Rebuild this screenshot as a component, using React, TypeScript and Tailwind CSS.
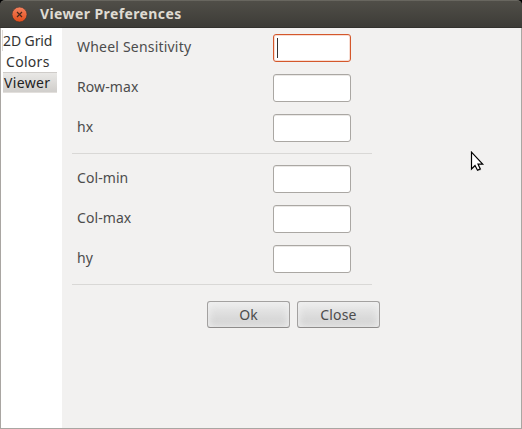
const groups = [
  [
    { label: "Wheel Sensitivity", spacing: "tracking-[0.2px]", focused: true },
    { label: "Row-max", spacing: "tracking-[0.1px]" },
    { label: "hx", spacing: "tracking-normal" },
  ],
  [
    { label: "Col-min", spacing: "tracking-[0.08px]" },
    { label: "Col-max", spacing: "tracking-[0.08px]" },
    { label: "hy", spacing: "tracking-normal" },
  ],
];

function TitleBar() {
  return (
    <header className="flex h-7 shrink-0 items-center rounded-t-[5px] border-t border-b border-t-[#68665f] border-b-[#33322e] bg-gradient-to-b from-[#504e48] to-[#3d3c37] pl-3">
      <svg width="16" height="16" viewBox="0 0 16 16" className="mt-px shrink-0">
        <defs>
          <linearGradient id="close" x1="0" y1="0" x2="0" y2="1">
            <stop offset="0" stopColor="#f58360" />
            <stop offset="1" stopColor="#e34c19" />
          </linearGradient>
        </defs>
        <circle cx="7.5" cy="7.5" r="7.5" fill="url(#close)" stroke="#34332f" strokeWidth="0.6" />
        <path d="M5 5l5 5M10 5l-5 5" stroke="#48291c" strokeWidth="1.2" />
      </svg>
      <h1 className="ml-3 whitespace-nowrap text-[14px] leading-5 font-bold tracking-[0.4px] text-[#dfdbd2]">
        Viewer Preferences
      </h1>
    </header>
  );
}

function Sidebar() {
  return (
    <nav className="w-[61px] shrink-0 bg-white pt-0.5 pl-px text-[14px] leading-[21px] text-[#333] whitespace-nowrap">
      <div className="h-[21px] w-[57px] border-l border-[#dedbd8] tracking-[-0.1px]">2D Grid</div>
      <div className="h-[21px] pl-1 tracking-[0.3px]">Colors</div>
      <div className="ml-px h-[21px] w-[54px] border-y border-t-[#cfccc9] border-b-[#e2dfdc] bg-gradient-to-b from-[#e9e8e6] to-[#d0cecb] pl-px leading-[19px] tracking-[0.35px] text-[#222]">
        Viewer
      </div>
    </nav>
  );
}

function Field({ label, spacing, focused }: { label: string; spacing: string; focused?: boolean }) {
  return (
    <div className="flex h-7">
      <label className={`w-[201px] pl-[5px] text-[14px] leading-[26px] text-[#4c4c4c] whitespace-nowrap ${spacing}`}>
        {label}
      </label>
      <div
        className={`h-7 w-[78px] rounded-[3px] border bg-white py-[3px] pl-[3px] ${
          focused
            ? "border-[#d4572b] shadow-[inset_0_0_0_1px_#f7ddd3]"
            : "border-[#aaa7a3] shadow-[inset_0_1px_0_#ebe9e7]"
        }`}
      >
        {focused && <div className="h-5 w-px bg-[#333]" />}
      </div>
    </div>
  );
}

function Button({ children }: { children: string }) {
  return (
    <button className="h-[27px] w-[83px] rounded-[3px] border border-[#a3a1a0] border-b-[#8e8c8b] bg-gradient-to-b from-[#ececec] to-[#cfcfcf] text-[14px] leading-[25px] tracking-[0.15px] text-[#4c4c4c] shadow-[inset_0_0_7px_1px_#f0f0f0]">
      {children}
    </button>
  );
}

export default function App() {
  return (
    <div className="relative h-[429px] w-[522px] overflow-hidden bg-black font-['Noto_Sans','Open_Sans',sans-serif]">
      <div className="flex h-full flex-col">
        <TitleBar />
        <div className="flex flex-1 border-x border-b border-[#a9a6a2] bg-[#f2f1f0]">
          <Sidebar />
          <main className="w-[318px] pt-1.5 pl-2.5">
            {groups.map((fields, i) => (
              <section key={i} className={`w-[300px] border-b border-[#d9d8d6] pb-[11px] ${i ? "pt-[11px]" : ""}`}>
                <div className="flex flex-col gap-3">
                  {fields.map((f) => (
                    <Field key={f.label} {...f} />
                  ))}
                </div>
              </section>
            ))}
            <div className="mt-4 flex justify-end gap-[7px]">
              <Button>Ok</Button>
              <Button>Close</Button>
            </div>
          </main>
        </div>
      </div>
      <svg className="absolute top-[151px] left-[470px]" width="16" height="23" viewBox="0 0 16 23">
        <path d="M2.5 2.5V18L6 14.8l2.6 5.4 2.8-1.3L9 13.6h4z" fill="#777" opacity="0.35" />
        <path d="M1.5 1.2V18L5 14.5l2.5 4.7 2.8-1.3L8 13.2h4.7z" fill="#fff" stroke="#000" strokeWidth="1.2" />
      </svg>
    </div>
  );
}
